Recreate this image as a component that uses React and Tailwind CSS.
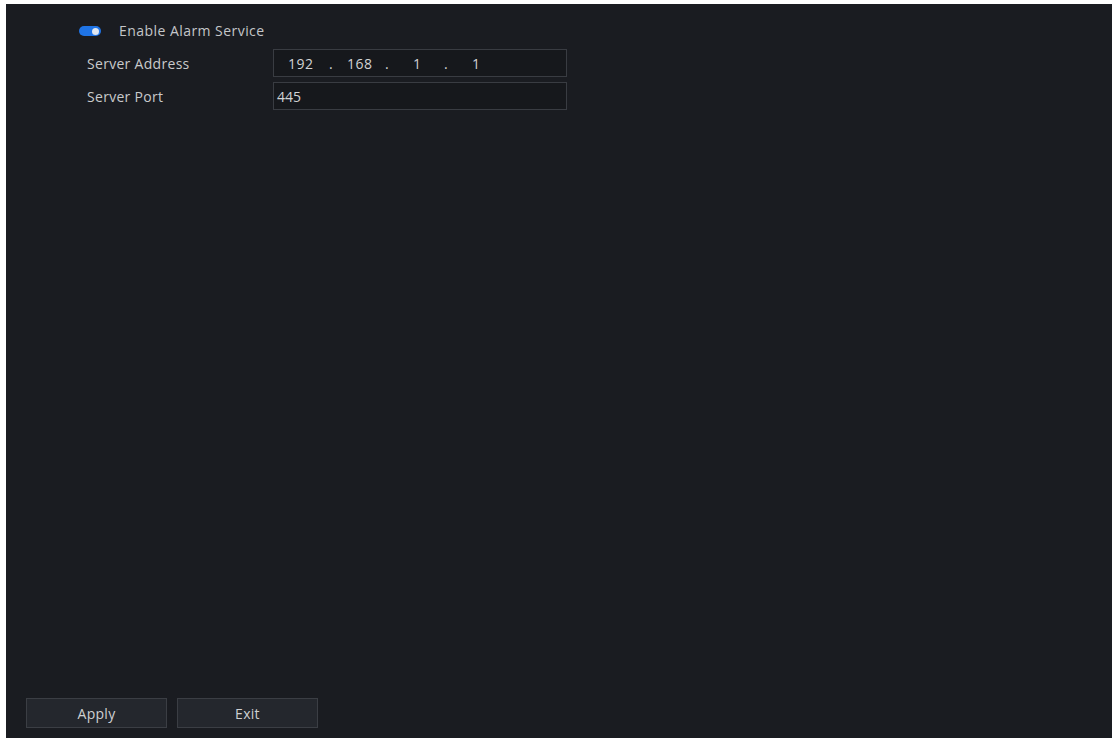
import React from "react";

export default function App() {
  return (
    <div
      className="w-[1114px] h-[740px] bg-white pt-[4px] pl-[6px] pr-[2px] pb-[2px]"
      style={{ fontFamily: '"Open Sans", "Liberation Sans", sans-serif' }}
    >
      <div className="w-full h-full bg-[#1a1c21] flex flex-col text-[#c9cacc] text-[14px]">
        <div className="flex-1 pl-[73px] pt-[19px]">
          <div className="flex items-center h-[16px]">
            <div className="w-[22px] h-[10px] rounded-full bg-[#1f74e6] relative">
              <div className="absolute right-[2px] top-[1.5px] w-[7px] h-[7px] rounded-full bg-[#dfe6f0]" />
            </div>
            <span className="ml-[18px] text-[14px] leading-none tracking-[0.45px] text-[#c4c6c9]">Enable Alarm Service</span>
          </div>
          <div className="mt-[10px] flex flex-col gap-[5px] pl-[8px]">
            <div className="flex items-center">
              <span className="w-[186px] text-[14px] tracking-[0.3px]">Server Address</span>
              <div className="w-[294px] h-[28px] border border-[#393c42] bg-[#16181c] flex items-center text-[14px] text-[#d2d3d5]">
                <span className="ml-[14px] w-[41px] tracking-[0.5px]">192</span>
                <span className="w-[18px]">.</span>
                <span className="w-[38px] tracking-[0.5px]">168</span>
                <span className="w-[28px]">.</span>
                <span className="w-[31px]">1</span>
                <span className="w-[28px]">.</span>
                <span>1</span>
              </div>
            </div>
            <div className="flex items-center">
              <span className="w-[186px] text-[14px] tracking-[0.3px]">Server Port</span>
              <div className="w-[294px] h-[28px] border border-[#393c42] bg-[#16181c] flex items-center text-[14px] text-[#d2d3d5] pl-[3px]">
                445
              </div>
            </div>
          </div>
        </div>
        <div className="flex gap-[10px] pl-[20px] pb-[10px]">
          <button className="w-[141px] h-[30px] border border-[#3b3e44] bg-[#24272d] text-[14px] tracking-[0.3px] text-[#cfd0d2]">
            Apply
          </button>
          <button className="w-[141px] h-[30px] border border-[#3b3e44] bg-[#24272d] text-[14px] tracking-[0.3px] text-[#cfd0d2]">
            Exit
          </button>
        </div>
      </div>
    </div>
  );
}
